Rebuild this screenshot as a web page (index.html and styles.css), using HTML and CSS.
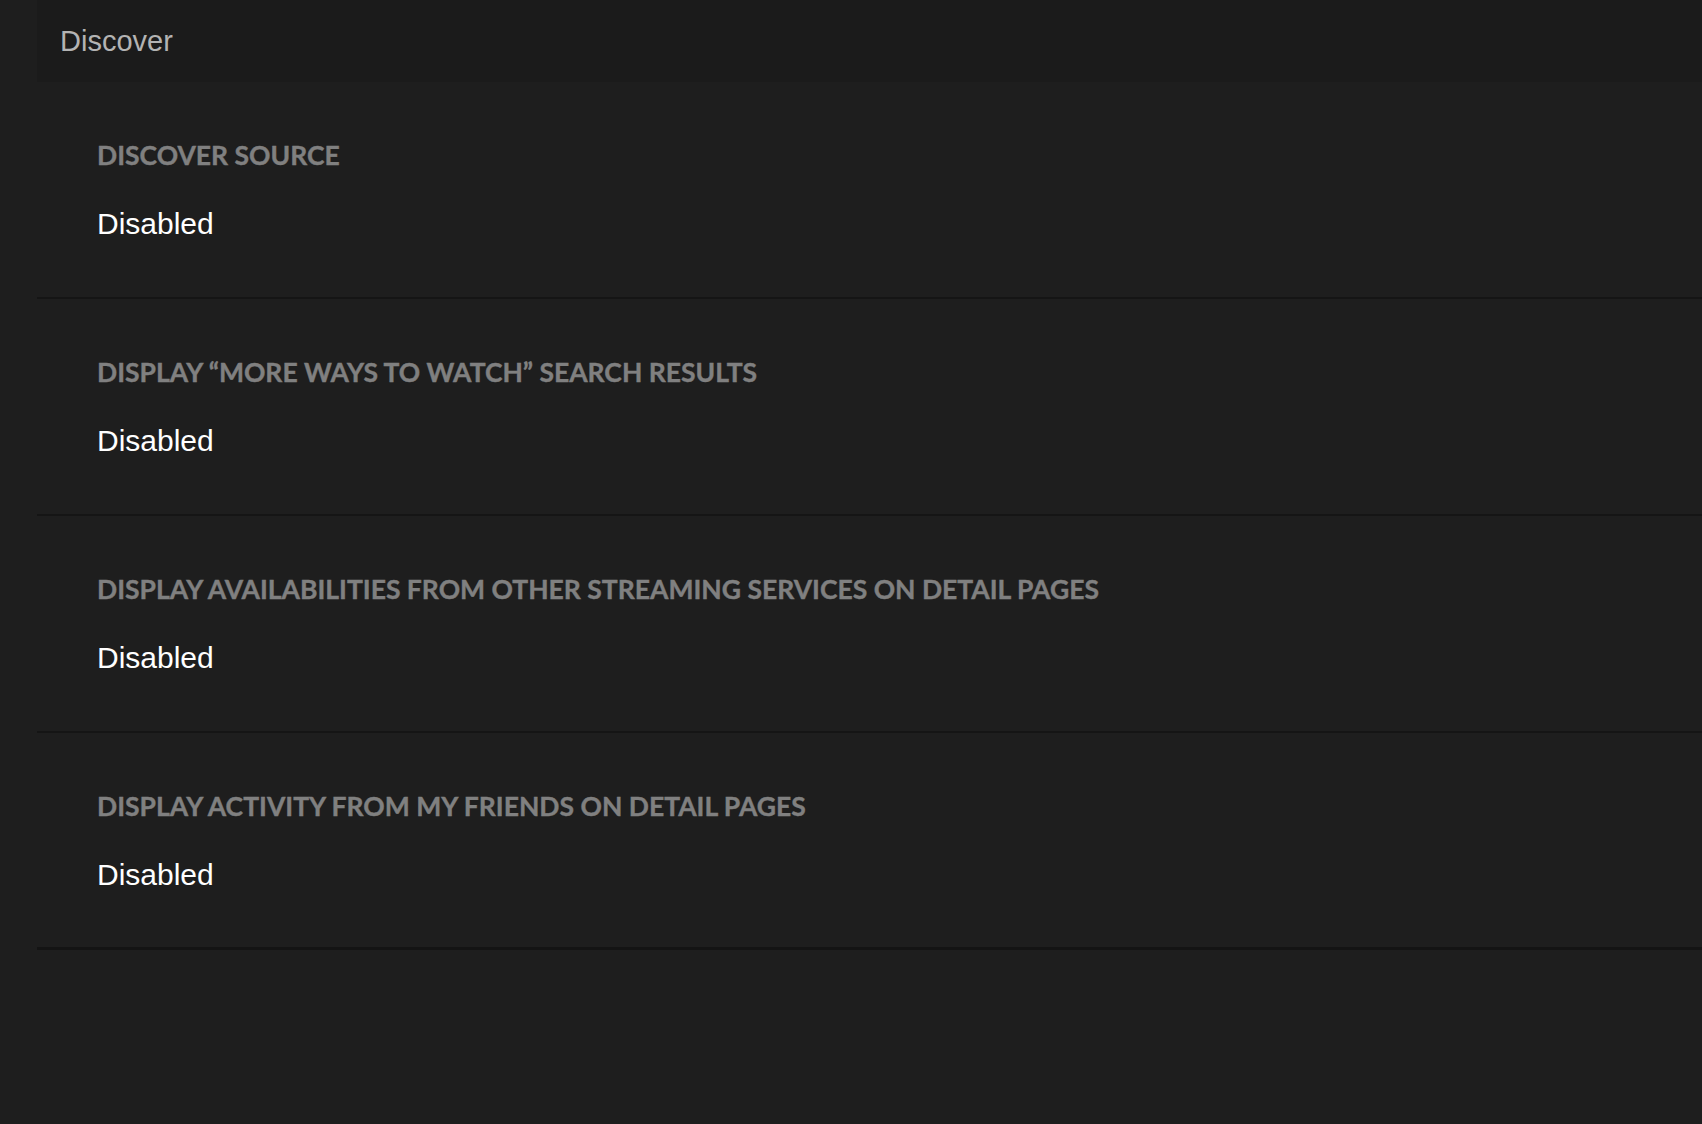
FILE: index.html
```html
<!DOCTYPE html>
<html lang="en">

<head>
  <meta charset="UTF-8">
  <meta name="viewport" content="width=device-width, initial-scale=1.0">
  <title>Discover</title>
  <link rel="stylesheet" href="styles.css">
</head>

<body>
  <div class="page">
    <div class="header">Discover</div>

    <div class="setting">
      <div class="label">Discover source</div>
      <div class="value">Disabled</div>
    </div>

    <div class="setting">
      <div class="label">Display &ldquo;More ways to watch&rdquo; search results</div>
      <div class="value">Disabled</div>
    </div>

    <div class="setting">
      <div class="label">Display availabilities from other streaming services on detail pages</div>
      <div class="value">Disabled</div>
    </div>

    <div class="setting last">
      <div class="label">Display activity from my friends on detail pages</div>
      <div class="value">Disabled</div>
    </div>
  </div>
</body>

</html>
```

FILE: styles.css
```css
* {
  padding: 0;
  margin: 0;
  box-sizing: border-box;
}

body {
  background-color: #1e1e1e;
  font-family: 'Liberation Sans', Arial, sans-serif;
  height: 100vh;
  overflow: hidden;
}

.page {
  padding-left: 37px;
}

.header {
  display: flex;
  align-items: center;
  height: 82px;
  padding-left: 23px;
  background-color: #1b1b1b;
  color: #b3b3b3;
  font-size: 29px;
}

.setting {
  height: 217px;
  padding: 58px 0 0 60px;
  border-bottom: 2px solid #151515;
}

.setting:first-of-type {
  height: 216px;
}

.setting.last {
  border-bottom: 3px solid #141414;
}

.label {
  font-family: Lato, 'Noto Sans', sans-serif;
  font-weight: 700;
  font-size: 26.5px;
  line-height: 30px;
  text-transform: uppercase;
  color: #808080;
  -webkit-text-stroke: 0.4px #808080;
}

.value {
  margin-top: 37px;
  font-size: 30px;
  line-height: 34px;
  color: #ffffff;
}
```
